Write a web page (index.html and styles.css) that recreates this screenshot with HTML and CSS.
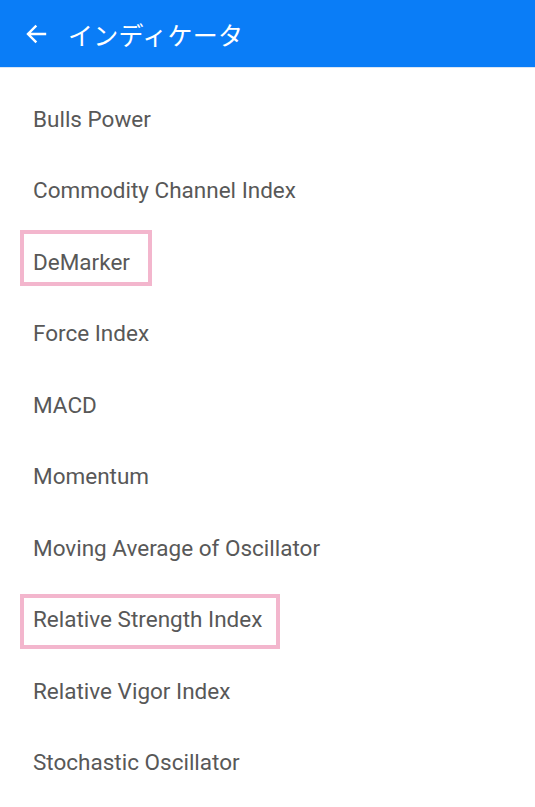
FILE: index.html
```html
<!DOCTYPE html>
<html lang="ja">
<head>
<meta charset="utf-8">
<link rel="stylesheet" href="styles.css">
</head>
<body>
<header class="appbar">
  <svg class="back" width="24" height="24" viewBox="0 0 24 24"><path d="M21 12H4.5M11.5 4.5L4 12l7.5 7.5" fill="none" stroke="#fff" stroke-width="2.4" stroke-linecap="square"/></svg>
  <h1 class="title">インディケータ</h1>
</header>
<ul class="list">
  <li class="row"><span class="label">Bulls Power</span></li>
  <li class="row"><span class="label">Commodity Channel Index</span></li>
  <li class="row"><span class="label mark mark-a">DeMarker</span></li>
  <li class="row"><span class="label">Force Index</span></li>
  <li class="row"><span class="label">MACD</span></li>
  <li class="row"><span class="label">Momentum</span></li>
  <li class="row"><span class="label">Moving Average of Oscillator</span></li>
  <li class="row"><span class="label mark mark-b">Relative Strength Index</span></li>
  <li class="row"><span class="label">Relative Vigor Index</span></li>
  <li class="row"><span class="label">Stochastic Oscillator</span></li>
</ul>
</body>
</html>
```
FILE: styles.css
```css
html, body { margin: 0; padding: 0; background: #fff; }
body { font-family: Roboto, "Noto Sans", "Noto Sans CJK JP", sans-serif; overflow: hidden; height: 807px; }
.appbar {
  height: 68px;
  background: #0a7df7;
  display: flex;
  align-items: center;
  padding-left: 24px;
  box-sizing: border-box;
  border-bottom: 1px solid #d9e6f5;
}
.back { flex: none; margin-top: 1px; }
.title {
  margin: 0 0 0 20px;
  font-family: "Noto Sans CJK JP", sans-serif;
  font-weight: 400;
  font-size: 25px;
  color: #fff;
  letter-spacing: 0.3px;
}
.list { list-style: none; margin: 0; padding: 15px 0 0 0; }
.row {
  height: 71.5px;
  display: flex;
  align-items: center;
  padding-left: 33px;
}
.label { font-size: 22.5px; color: #585858; line-height: 24px; }
.mark {
  border: 4px solid #f3b6cd;
  margin-left: -13px;
  padding-left: 9px;
  padding-right: 14px;
}
.mark-a {
  padding-top: 16px;
  padding-bottom: 8px;
  padding-right: 18px;
  margin-bottom: 8px;
}
.mark-b {
  padding-top: 9px;
  padding-bottom: 14px;
  margin-top: 5px;
}
```
